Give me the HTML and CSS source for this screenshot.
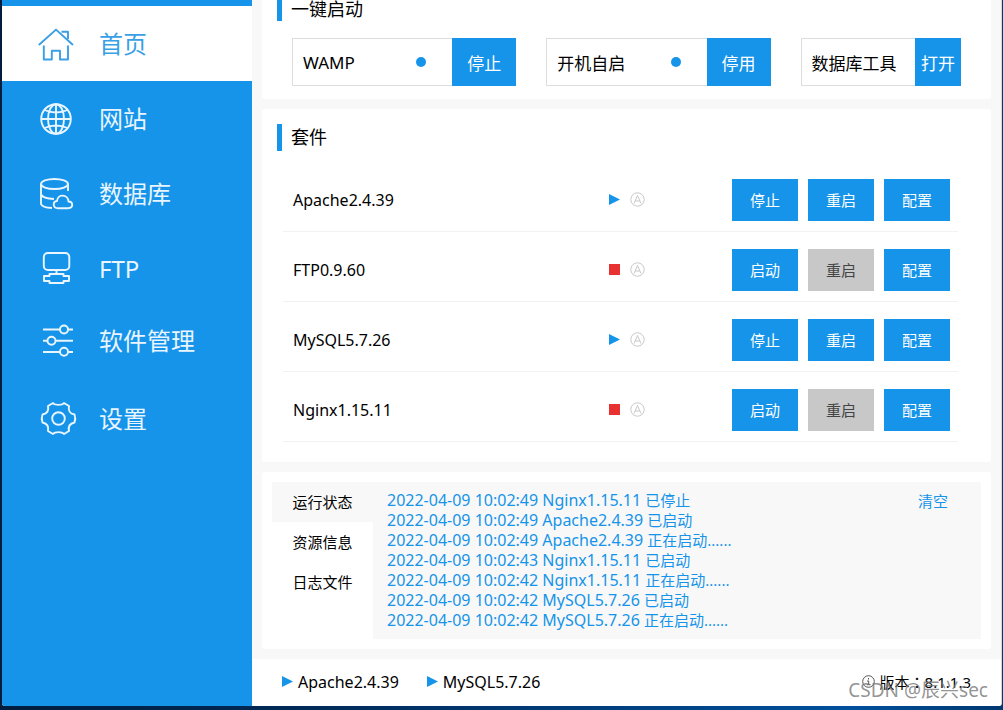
FILE: index.html
```html
<!DOCTYPE html>
<html lang="zh-CN">
<head>
<meta charset="utf-8">
<title>首页</title>
<link rel="stylesheet" href="styles.css">
</head>
<body>
<svg class="defs" width="0" height="0" aria-hidden="true">
  <symbol id="auto" viewBox="0 0 15 15"><circle cx="7.500" cy="7.500" r="6.700" fill="none" stroke="currentColor"/><path d="M4 11.500 7.500 3.500 11 11.500M5.200 9h4.600" fill="none" stroke="currentColor"/></symbol>
  <symbol id="play" viewBox="0 0 11 11"><path d="M0 0 11 5.500 0 11z" fill="#1694e9"/></symbol>
  <symbol id="stop" viewBox="0 0 11 11"><path d="M0 0h11v11H0z" fill="#e83232"/></symbol>
</svg>
<div class="window">
  <nav class="sidebar">
    <a class="nav-item active" href="#"><svg class="nav-icon" viewBox="0 0 40 41"><path d="M.8 22 18 6.600 35 22M5.800 22.500V36.500H13.800V27.800H22V36.500H30V22.500M23.500 8.800H30V16"/></svg>首页</a>
    <a class="nav-item" href="#"><svg class="nav-icon" viewBox="0 0 40 41"><circle cx="18" cy="21" r="14.800"/><ellipse cx="18" cy="21" rx="8" ry="14.800"/><path d="M18 6.200V35.800M3.200 21H32.800M6.500 12Q18 17 29.500 12M6.500 30Q18 25 29.500 30"/></svg>网站</a>
    <a class="nav-item" href="#"><svg class="nav-icon" viewBox="0 0 40 41"><ellipse cx="16.500" cy="11" rx="13.500" ry="5"/><path d="M3 11V31Q4 34.500 14 35M3 21.500Q5 25.500 16 26M30 11V18M20 35.300H30C36 35 35 28.500 30.500 28.500C30 21 19.500 20.500 19 28C14.500 28.500 14.500 35 20 35.300Z"/></svg>数据库</a>
    <a class="nav-item" href="#"><svg class="nav-icon" viewBox="0 0 40 41"><rect x="5.800" y="5" width="25.500" height="17" rx="4"/><path d="M18.500 22V26M11.500 26H25.500V28H31V33H25.500V35H11.500V33H6V28H11.500Z"/></svg>FTP</a>
    <a class="nav-item short" href="#"><svg class="nav-icon" viewBox="0 0 40 41"><path d="M5 9.500H22M30 9.500H35M5 20.700H9.500M17.500 20.700H35M5 32H22M30 32H35"/><circle cx="26" cy="9.500" r="4"/><circle cx="13.500" cy="20.700" r="4"/><circle cx="26" cy="31.800" r="4"/></svg>软件管理</a>
    <a class="nav-item tall" href="#"><svg class="nav-icon" viewBox="0 0 40 41"><circle cx="20.500" cy="20.500" r="6.300"/><path d="M15 5C17 7.500 24 7.500 26 5L31 8C30 13 31.500 15.500 36.500 16.500Q38 20.500 36.500 24.500C31.500 25.500 30 28 31 33L26 36C24 33.500 17 33.500 15 36L10 33C11 28 9.500 25.500 4.500 24.500Q3 20.500 4.500 16.500C9.500 15.500 11 13 10 8Z"/></svg>设置</a>
  </nav>
  <div class="content">
    <main>
      <section class="card quick">
        <h2 class="title">一键启动</h2>
        <div class="launchers">
          <div class="launcher"><span class="launcher-name">WAMP</span><i class="dot"></i><button type="button">停止</button></div>
          <div class="launcher"><span class="launcher-name">开机自启</span><i class="dot"></i><button type="button">停用</button></div>
          <div class="launcher compact"><span class="launcher-name">数据库工具</span><button type="button">打开</button></div>
        </div>
      </section>
      <section class="card suite">
        <h2 class="title">套件</h2>
        <ul class="services">
          <li><span class="name">Apache2.4.39</span><svg class="state"><use href="#play"/></svg><svg class="auto"><use href="#auto"/></svg><div class="actions"><button type="button">停止</button><button type="button">重启</button><button type="button">配置</button></div></li>
          <li><span class="name">FTP0.9.60</span><svg class="state"><use href="#stop"/></svg><svg class="auto"><use href="#auto"/></svg><div class="actions"><button type="button">启动</button><button type="button" disabled>重启</button><button type="button">配置</button></div></li>
          <li><span class="name">MySQL5.7.26</span><svg class="state"><use href="#play"/></svg><svg class="auto"><use href="#auto"/></svg><div class="actions"><button type="button">停止</button><button type="button">重启</button><button type="button">配置</button></div></li>
          <li><span class="name">Nginx1.15.11</span><svg class="state"><use href="#stop"/></svg><svg class="auto"><use href="#auto"/></svg><div class="actions"><button type="button">启动</button><button type="button" disabled>重启</button><button type="button">配置</button></div></li>
        </ul>
      </section>
      <section class="card status">
        <div class="tabs">
          <button type="button" class="tab selected">运行状态</button>
          <button type="button" class="tab">资源信息</button>
          <button type="button" class="tab">日志文件</button>
        </div>
        <div class="log">
          <ul>
            <li>2022-04-09 10:02:49 Nginx1.15.11 <span>已停止</span></li>
            <li>2022-04-09 10:02:49 Apache2.4.39 <span>已启动</span></li>
            <li>2022-04-09 10:02:49 Apache2.4.39 <span>正在启动......</span></li>
            <li>2022-04-09 10:02:43 Nginx1.15.11 <span>已启动</span></li>
            <li>2022-04-09 10:02:42 Nginx1.15.11 <span>正在启动......</span></li>
            <li>2022-04-09 10:02:42 MySQL5.7.26 <span>已启动</span></li>
            <li>2022-04-09 10:02:42 MySQL5.7.26 <span>正在启动......</span></li>
          </ul>
          <a class="clear" href="#">清空</a>
        </div>
      </section>
    </main>
    <footer class="footer">
      <span class="running"><svg class="state"><use href="#play"/></svg>Apache2.4.39</span>
      <span class="running"><svg class="state"><use href="#play"/></svg>MySQL5.7.26</span>
      <span class="version"><svg class="info" viewBox="0 0 13 13"><circle cx="6.500" cy="6.500" r="5.800"/><path d="M6.500 3v1.500M5 6H6.700V9.700M4.800 9.700H8.500"/></svg><span lang="zh-TW">版本：8.1.1.3</span></span>
    </footer>
  </div>
</div>
<div class="watermark">CSDN @辰兴sec</div>
</body>
</html>
```
FILE: styles.css
```css
* { box-sizing: border-box; }
body {
  margin: 0;
  min-height: 100vh;
  display: flex;
  padding: 0 1px 4px 2px;
  background: linear-gradient(90deg, #001d3d, #002a57 30%, #00509c 85%, #00386f);
  font-family: "Noto Sans", "Noto Sans CJK SC", sans-serif;
  font-size: 15px;
  color: #000;
}
h2, ul { margin: 0; padding: 0; font-weight: 400; }
ul { list-style: none; }
button { border: 0; padding: 0; font: inherit; color: #fff; background: #1694e9; }
a { text-decoration: none; }
.defs { position: absolute; }
.window {
  flex: 1;
  display: flex;
  background: #f8f8f8;
  border-right: 1px solid #d8d8d8;
  border-radius: 0 0 3px 3px;
  overflow: hidden;
}
.sidebar { width: 250px; padding-top: 6px; background: #1694e9; }
.nav-item {
  display: flex;
  align-items: center;
  height: 75px;
  padding-left: 36px;
  gap: 21px;
  font-size: 24px;
  line-height: 36px;
  color: #e9f5ff;
}
.nav-item.short { height: 69px; }
.nav-item.tall { height: 87px; }
.nav-item.active { background: #fff; color: #3a9fe4; }
.nav-icon { width: 40px; height: 41px; fill: none; stroke: currentColor; stroke-width: 1.9; stroke-linejoin: round; }
.content { flex: 1; display: flex; flex-direction: column; }
main { flex: 1; display: flex; flex-direction: column; gap: 10px; padding: 0 10px 10px; }
.card { background: #fff; border-radius: 3px; }
.title { border-left: 5px solid #1694e9; padding-left: 9px; margin-left: 15px; font-size: 18px; line-height: 27px; }
.quick { padding-bottom: 13px; border-radius: 0 0 3px 3px; }
.quick .title { height: 21px; line-height: 19px; }
.launchers { display: flex; gap: 30px; padding: 17px 30px 0; }
.launcher { display: flex; align-items: center; flex: 224; height: 48px; border: 1px solid #ddd; border-right: 0; font-size: 17px; }
.launcher.compact { flex: 160; }
.launcher-name { flex: 1; padding-left: 10px; }
.launcher button { width: 64px; height: 48px; }
.launcher.compact button { width: 46px; }
.dot { width: 10px; height: 10px; margin-right: 26px; border-radius: 50%; background: #1694e9; }
.suite { padding: 15px 33px 20px 21px; }
.suite .title { margin-left: -6px; margin-bottom: 11px; }
.services li { display: flex; align-items: center; height: 70px; padding: 6px 8px 0 10px; border-bottom: 1px solid #f2f2f2; }
.name { flex: 1; font-size: 16px; }
.state { width: 11px; height: 11px; }
.auto { width: 15px; height: 15px; margin: 0 87px 0 10px; color: #c8c8c8; }
.actions { display: flex; gap: 10px; }
.actions button { width: 66px; height: 42px; }
.actions button:disabled { background: #c8c8c8; color: #444; }
.status { display: flex; padding: 10px; }
.tabs { width: 101px; }
.tab { display: block; width: 100%; height: 40px; padding-bottom: 2px; background: #fff; color: #000; }
.tab.selected { background: #f8f8f8; }
.log { flex: 1; display: flex; justify-content: space-between; padding: 8px 33px 9px 14px; background: #f8f8f8; line-height: 20px; color: #1694e9; }
.log ul { font-size: 16px; }
.log span { font-size: 15px; }
.clear { color: #1694e9; line-height: 22px; }
.footer { display: flex; align-items: center; gap: 28px; height: 47px; padding: 0 30px 2px; background: #fff; }
.running, .version { display: flex; align-items: center; gap: 5px; }
.running { font-size: 16px; }
.version { margin-left: auto; font-family: "Noto Sans", "Noto Sans CJK TC", sans-serif; }
.info { width: 13px; height: 13px; fill: none; stroke: #555; }
.watermark { position: absolute; right: 15px; bottom: 6px; font-size: 19px; line-height: 28px; color: rgba(120, 120, 120, .8); }
```
